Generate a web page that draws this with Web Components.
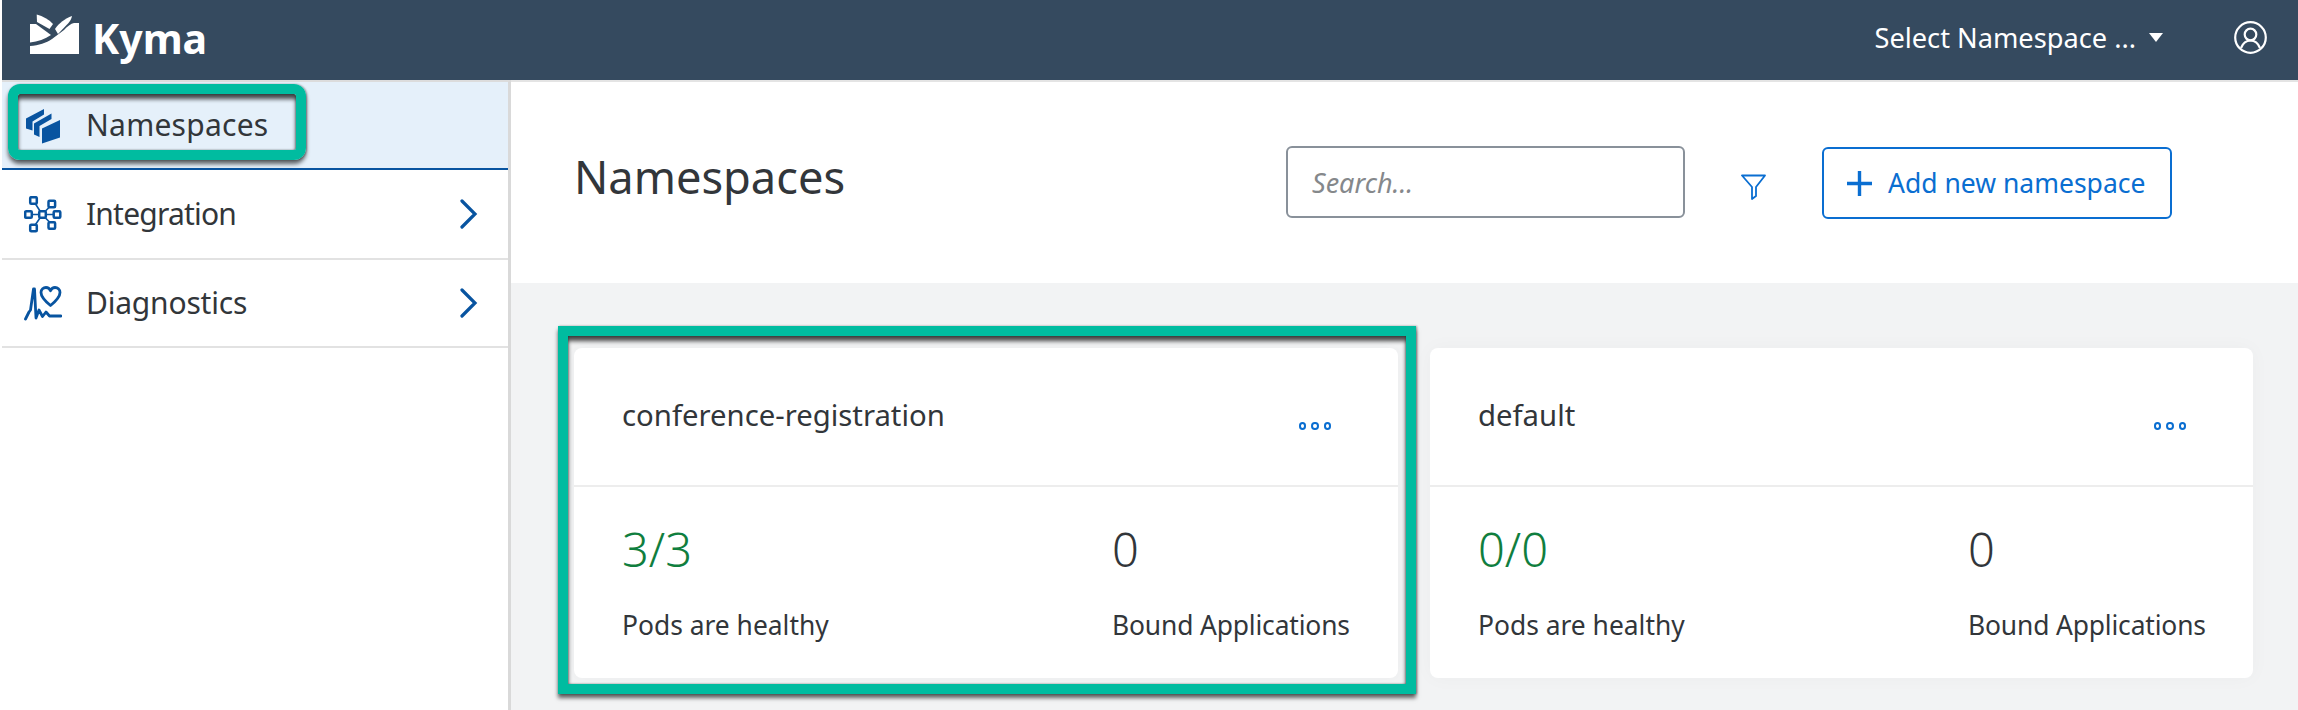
<!DOCTYPE html>
<html>
<head>
<meta charset="utf-8">
<title>Kyma</title>
<style>
html, body { margin: 0; height: 100%; background: #fff; }
body { font-family: "Noto Sans", sans-serif; color: #32363a; padding-left: 2px; box-sizing: border-box; overflow: hidden; }
</style>
</head>
<body>
<kyma-app>
	<shell-bar slot="top" selected="Select Namespace ..."></shell-bar>
	<side-nav slot="side">
		<nav-item label="Namespaces" icon="namespaces" active callout style="--label-spacing: .25px"></nav-item>
		<nav-item label="Integration" icon="integration" arrow style="--label-spacing: -.8px"></nav-item>
		<nav-item label="Diagnostics" icon="diagnostics" arrow style="--label-spacing: -.2px"></nav-item>
	</side-nav>
	<page-head slot="main" title-text="Namespaces"></page-head>
	<card-grid slot="main">
		<ns-card name="conference-registration" pods="3/3" apps="0" callout></ns-card>
		<ns-card name="default" pods="0/0" apps="0"></ns-card>
	</card-grid>
</kyma-app>

<script>
// Icons
const ICONS = {
	namespaces: `<svg style="margin-top:3px" width="34" height="35" viewBox="0 0 34 35" fill="#0854a0">
		<path d="M0 9.500 18 0v5.500L6.500 12.500V21.500L0 19.500z"/>
		<path d="M8 14.500 25.500 4.500v5.500L13.500 17v11L8 25.500z"/>
		<path d="M16 19.500 34 11v17.500L16 34.500z"/>
	</svg>`,
	integration: `<svg width="38" height="37" viewBox="0 0 38 37" fill="none" stroke="#0854a0" stroke-width="2.500">
		<rect x="6.200" y="1.200" width="6.600" height="6.600" rx="1"/>
		<rect x="24.500" y="4.700" width="6.600" height="6.600" rx="1"/>
		<rect x="1.200" y="15.200" width="6.600" height="6.600" rx="1"/>
		<rect x="15.200" y="15.200" width="6.600" height="6.600" rx="1"/>
		<rect x="29.700" y="15.200" width="6.600" height="6.600" rx="1"/>
		<rect x="6.200" y="28.700" width="6.600" height="6.600" rx="1"/>
		<rect x="24.500" y="26.200" width="6.600" height="6.600" rx="1"/>
		<path d="M8 18.500h7M22 18.500h7.500M11.500 8l4.500 7M25.500 11l-4 4M11.500 28.500l4.500-6.500M25.500 26l-4-4" stroke-width="1.600"/>
	</svg>`,
	diagnostics: `<svg width="38" height="35" viewBox="0 0 38 35" fill="none" stroke="#0854a0" stroke-width="2.800" stroke-linejoin="round" stroke-linecap="round">
		<path d="M26.500 19.500C21 15 17 11 17 6.500 17 3 19.500 1.500 22 1.500 24 1.500 25.600 2.700 26.500 4.700 27.400 2.700 29 1.500 31 1.500 33.500 1.500 36 3 36 6.500 36 11 32 15 26.500 19.500z"/>
		<path d="M1.500 33 5 26 6.500 24 9.500 3 10.500 3 12 32l3-8 3.500 6.500L22 26l3.500 4H37"/>
	</svg>`
};

// Overlay frame from the docs screenshot
const calloutTpl = document.createElement('template');
calloutTpl.innerHTML = `<style>
:host {
	position: absolute;
	display: block;
	box-sizing: border-box;
	border: 10px solid #00bca0;
	border-radius: var(--callout-radius, 0);
	box-shadow: 0 4px 4px rgba(0,0,0,.6), 1px 0 2px rgba(0,0,0,.35), inset 0 5px 4px rgba(0,0,0,.7), inset 0 0 2px rgba(0,0,0,.55);
	pointer-events: none;
	z-index: 5;
}
</style>`;
class CalloutBox extends HTMLElement {
	constructor() {
		super();
		this.attachShadow({ mode: 'open' }).appendChild(calloutTpl.content.cloneNode(true));
	}
}
customElements.define('callout-box', CalloutBox);

// App frame
const appTpl = document.createElement('template');
appTpl.innerHTML = `<style>
:host {
	display: grid;
	grid-template-columns: 509px 1fr;
	grid-template-rows: 80px 1fr;
	height: 710px;
}
.top { grid-column: 1 / 3; }
.side { border-right: 3px solid #d9d9d9; border-top: 2px solid #dcdcdc; min-height: 0; }
.main { background: #f2f3f4; border-top: 2px solid #e4e4e4; min-width: 0; }
</style>
<div class="top"><slot name="top"></slot></div>
<div class="side"><slot name="side"></slot></div>
<div class="main"><slot name="main"></slot></div>`;
class KymaApp extends HTMLElement {
	constructor() {
		super();
		this.attachShadow({ mode: 'open' }).appendChild(appTpl.content.cloneNode(true));
	}
}
customElements.define('kyma-app', KymaApp);

// Shell bar
const shellTpl = document.createElement('template');
shellTpl.innerHTML = `<style>
:host {
	display: flex;
	align-items: center;
	height: 80px;
	background: #354a5f;
	color: #fff;
	padding: 0 31px 0 28px;
	box-sizing: border-box;
}
.logo { display: block; margin-top: -13px; }
.name { font-size: 41px; font-weight: 700; margin-left: 13px; line-height: 1; margin-top: -4px; }
.pick { margin-left: auto; font-size: 27.200px; display: flex; align-items: center; margin-top: -6px; }
.caret { width: 0; height: 0; border: 7px solid transparent; border-top: 9px solid #fff; border-bottom: 0; margin-left: 13px; }
.user { display: block; margin-left: 71px; margin-top: -6px; }
</style>
<svg class="logo" width="49" height="40" viewBox="0 0 49 40" fill="#fff">
	<path d="M6.700 .5C13 2 19 5.500 23 10L19.500 15 7 8z"/>
	<path d="M25 15C29 9 35 4.500 42 2 41.500 5 40 7 38.500 9L28 20z"/>
	<path d="M0 10H6L21 21C15 25 8 27.500 0 28.500z"/>
	<path d="M0 32C9 31.500 16 29 22 25L34 16C37 12.500 41 9.500 44 9H49V40H0z"/>
</svg>
<span class="name">Kyma</span>
<span class="pick"><span id="sel"></span><span class="caret"></span></span>
<svg class="user" width="33" height="33" viewBox="0 0 33 33" fill="none" stroke="#fff" stroke-width="2.200">
	<circle cx="16.500" cy="16.500" r="15.300"/>
	<circle cx="16.500" cy="13.500" r="5.800"/>
	<path d="M7 27c2-5 5.500-7.500 9.500-7.500S24 22 26 27"/>
</svg>`;
class ShellBar extends HTMLElement {
	constructor() {
		super();
		this.attachShadow({ mode: 'open' }).appendChild(shellTpl.content.cloneNode(true));
	}
	connectedCallback() {
		this.shadowRoot.getElementById('sel').textContent = this.getAttribute('selected');
	}
}
customElements.define('shell-bar', ShellBar);

// Sidebar
const sideTpl = document.createElement('template');
sideTpl.innerHTML = `<style>:host { display: block; }</style><slot></slot>`;
class SideNav extends HTMLElement {
	constructor() {
		super();
		this.attachShadow({ mode: 'open' }).appendChild(sideTpl.content.cloneNode(true));
	}
}
customElements.define('side-nav', SideNav);

const itemTpl = document.createElement('template');
itemTpl.innerHTML = `<style>
:host {
	position: relative;
	display: flex;
	align-items: center;
	box-sizing: border-box;
	height: 90px;
	padding: 0 30px 0 21.500px;
	border-bottom: 2px solid #e2e2e2;
	font-size: 30px;
	color: #32363a;
}
:host([active]) { height: 88px; background: #e5f0fa; border-bottom-color: #0854a0; }
:host(:last-child) { height: 88px; }
.icon { width: 38px; height: 38px; display: flex; align-items: center; justify-content: center; margin-right: 24.500px; }
.label { flex: 1; margin-top: -1px; letter-spacing: var(--label-spacing, 0); }
.chev { display: block; }
callout-box { left: 6px; top: 2px; width: 298px; height: 76px; --callout-radius: 12px; }
</style>
<span class="icon"></span>
<span class="label"></span>`;
class NavItem extends HTMLElement {
	constructor() {
		super();
		this.attachShadow({ mode: 'open' }).appendChild(itemTpl.content.cloneNode(true));
	}
	connectedCallback() {
		const root = this.shadowRoot;
		root.querySelector('.label').textContent = this.getAttribute('label');
		root.querySelector('.icon').innerHTML = ICONS[this.getAttribute('icon')];
		if (this.hasAttribute('arrow')) {
			root.querySelector('.label').insertAdjacentHTML('afterend',
				`<svg class="chev" width="18" height="30" viewBox="0 0 18 30" fill="none" stroke="#0854a0" stroke-width="3.200" stroke-linecap="round"><path d="M2 2l13 13L2 28"/></svg>`);
		}
		if (this.hasAttribute('callout')) root.appendChild(document.createElement('callout-box'));
	}
}
customElements.define('nav-item', NavItem);

// Page header
const headTpl = document.createElement('template');
headTpl.innerHTML = `<style>
:host {
	display: flex;
	align-items: center;
	box-sizing: border-box;
	height: 201px;
	background: #fff;
	padding: 0 126px 0 63px;
}
h1 { margin: -12px 0 0; font-size: 45.200px; font-weight: 400; color: #32363a; flex: 1; }
.search {
	box-sizing: border-box;
	width: 399px;
	height: 72px;
	margin-top: -1px;
	border: 2px solid #89919a;
	border-radius: 6px;
	padding-left: 24px;
	display: flex;
	align-items: center;
	font-size: 27px;
	font-style: italic;
	color: #85888b;
}
.filter { display: block; margin: 9px 56px 0 56px; }
.add {
	box-sizing: border-box;
	width: 350px;
	height: 72px;
	margin-top: 1px;
	border: 2px solid #0a6ed1;
	border-radius: 6px;
	display: flex;
	align-items: center;
	padding-left: 23px;
	font-size: 26.500px;
	color: #0a6ed1;
}
.add svg { margin-right: 16px; }
</style>
<h1></h1>
<span class="search">Search...</span>
<svg class="filter" width="25" height="26" viewBox="0 0 25 26" fill="none" stroke="#0a6ed1" stroke-width="1.800" stroke-linejoin="round"><path d="M1 1.500h23L15 13v9l-4 3V13z"/></svg>
<span class="add"><svg width="25" height="25" viewBox="0 0 25 25" stroke="#0a6ed1" stroke-width="3.400"><path d="M0 12.500h25M12.500 0v25"/></svg>Add new namespace</span>`;
class PageHead extends HTMLElement {
	constructor() {
		super();
		this.attachShadow({ mode: 'open' }).appendChild(headTpl.content.cloneNode(true));
	}
	connectedCallback() {
		this.shadowRoot.querySelector('h1').textContent = this.getAttribute('title-text');
	}
}
customElements.define('page-head', PageHead);

// Card grid
const gridTpl = document.createElement('template');
gridTpl.innerHTML = `<style>
:host {
	display: grid;
	grid-template-columns: 824px 823px;
	gap: 32px;
	padding: 65px 0 0 63px;
}
</style><slot></slot>`;
class CardGrid extends HTMLElement {
	constructor() {
		super();
		this.attachShadow({ mode: 'open' }).appendChild(gridTpl.content.cloneNode(true));
	}
}
customElements.define('card-grid', CardGrid);

const cardTpl = document.createElement('template');
cardTpl.innerHTML = `<style>
:host {
	position: relative;
	display: block;
	height: 330px;
	background: #fff;
	border-radius: 8px;
	box-shadow: 0 0 20px rgba(0,0,0,.03);
}
.head {
	box-sizing: border-box;
	height: 139px;
	border-bottom: 2px solid #ededed;
	padding: 0 67px 0 48px;
	display: flex;
	align-items: center;
	justify-content: space-between;
}
.name { font-size: 29.300px; margin-top: -3px; }
.dots { display: flex; gap: 5px; margin-top: 18px; }
.dots i { box-sizing: border-box; width: 7.500px; height: 8px; border: 2px solid #0a6ed1; border-radius: 50%; }
.body { display: grid; grid-template-columns: 490px 1fr; padding: 30px 0 0 48px; }
.num { font-size: 47px; font-weight: 300; line-height: 64px; }
.num.ok { color: #107e3e; }
.lbl { font-size: 26.400px; line-height: 36px; margin-top: 26px; }
#col2 .lbl { letter-spacing: -.15px; }
callout-box { left: -16px; top: -22px; right: -18px; bottom: -16px; }
</style>
<div class="head"><span class="name"></span><span class="dots"><i></i><i></i><i></i></span></div>
<div class="body">
	<div><div class="num ok" id="pods"></div><div class="lbl">Pods are healthy</div></div>
	<div id="col2"><div class="num" id="apps"></div><div class="lbl">Bound Applications</div></div>
</div>`;
class NsCard extends HTMLElement {
	constructor() {
		super();
		this.attachShadow({ mode: 'open' }).appendChild(cardTpl.content.cloneNode(true));
	}
	connectedCallback() {
		const root = this.shadowRoot;
		root.querySelector('.name').textContent = this.getAttribute('name');
		root.getElementById('pods').textContent = this.getAttribute('pods');
		root.getElementById('apps').textContent = this.getAttribute('apps');
		if (this.hasAttribute('callout')) root.appendChild(document.createElement('callout-box'));
	}
}
customElements.define('ns-card', NsCard);
</script>
</body>
</html>
